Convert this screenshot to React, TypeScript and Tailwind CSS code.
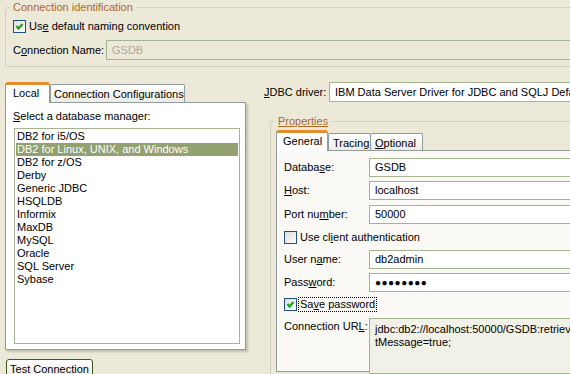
import React from 'react';

const Check = ({ checked }: { checked: boolean }) => (
  <span className="inline-block w-[13px] h-[13px] shrink-0 border border-[#1c5180] bg-gradient-to-br from-[#dcdcd7] to-white">
    {checked && (
      <svg width="11" height="11" viewBox="0 0 11 11" className="block">
        <polyline points="2.5,5 4.5,7.5 8.5,3" fill="none" stroke="#21a121" strokeWidth="2.2" />
      </svg>
    )}
  </span>
);

const Field = ({ label, value, className = '' }: { label: React.ReactNode; value: React.ReactNode; className?: string }) => (
  <div className={`flex items-center h-[19px] ${className}`}>
    <span className="w-[85px] shrink-0">{label}</span>
    <div className="w-[260px] h-[19px] border border-[#a5b490] bg-white pl-[5px] flex items-center">{value}</div>
  </div>
);

const databases = [
  'DB2 for i5/OS',
  'DB2 for Linux, UNIX, and Windows',
  'DB2 for z/OS',
  'Derby',
  'Generic JDBC',
  'HSQLDB',
  'Informix',
  'MaxDB',
  'MySQL',
  'Oracle',
  'SQL Server',
  'Sybase',
];

const App = () => {
  return (
    <div className="w-[570px] h-[374px] overflow-hidden bg-[#ece9d8] text-[11px] text-black leading-[13px] font-['Liberation_Sans',Arial,sans-serif] pt-[7px] pl-[5px]">
      {/* Connection identification */}
      <section className="relative w-[620px] h-[60px] border border-[#d0d0bf] rounded-[3px] pt-[12px] pl-[7px]">
        <span className="absolute -top-[7px] left-[4px] px-[3px] bg-[#ece9d8] text-[#b0671e]">Connection identification</span>
        <div className="flex items-center gap-[3px] h-[13px]">
          <Check checked />
          <span>Us<u>e</u> default naming convention</span>
        </div>
        <div className="flex items-center h-[20px] mt-[7px]">
          <span className="w-[93px] shrink-0">C<u>o</u>nnection Name:</span>
          <div className="w-[520px] h-[20px] border border-[#a5b490] flex items-center pl-[5px] text-[#aca899]">GSDB</div>
        </div>
      </section>

      <div className="flex mt-[15px]">
        {/* left column */}
        <div className="w-[241px] shrink-0">
          <div className="flex items-end h-[20px]">
            <div className="relative z-10 w-[45px] h-[21px] -mb-px bg-white border-x border-[#919b9c] border-t-[3px] border-t-[#e68b2c] rounded-t-[3px] pl-[7px] pt-[2px]">Local</div>
            <div className="w-[135px] h-[18px] border border-b-0 border-[#919b9c] rounded-t-[2px] bg-gradient-to-b from-white to-[#ecebe6] pl-[3px] pt-[3px]">Connection Configurations</div>
          </div>
          <div className="w-[241px] h-[248px] border border-[#919b9c] bg-white shadow-[2px_2px_2px_rgba(0,0,0,0.18)]">
            <div className="ml-[7px] mt-[7px]"><u>S</u>elect a database manager:</div>
            <div className="ml-[8px] mt-[5px] w-[226px] h-[216px] border border-[#a5b490] bg-white pt-px px-px">
              {databases.map((d, i) => (
                <div key={d} className={`h-[13px] pl-px whitespace-nowrap ${i === 1 ? 'bg-[#93a070] text-white' : ''}`}>{d}</div>
              ))}
            </div>
          </div>
          <button className="ml-px mt-[9px] w-[87px] h-[23px] border border-[#3d5b1e] rounded-[3px] bg-gradient-to-b from-white to-[#ecebe6] text-[11px] pb-[3px]">Test Connection</button>
        </div>

        {/* right column */}
        <div className="ml-[18px] w-[320px] shrink-0">
          <div className="flex items-center h-[20px]">
            <span className="w-[65px] shrink-0"><u>J</u>DBC driver:</span>
            <div className="w-[260px] h-[20px] border border-[#a5b490] bg-white pl-[5px] flex items-center whitespace-nowrap overflow-hidden">IBM Data Server Driver for JDBC and SQLJ Default</div>
          </div>

          <section className="relative ml-[6px] mt-[19px] h-[260px] border-l border-t border-[#d0d0bf] rounded-tl-[3px] pt-[8px] pl-[5px]">
            <span className="absolute -top-[7px] left-[4px] px-[3px] bg-[#ece9d8] text-[#b0671e] underline">Properties</span>
            <div className="flex items-end h-[20px]">
              <div className="relative z-10 w-[52px] h-[21px] -mb-px bg-white border-x border-[#919b9c] border-t-[3px] border-t-[#e68b2c] rounded-t-[3px] pl-[6px] pt-[2px]">General</div>
              <div className="w-[43px] h-[17px] border border-b-0 border-[#919b9c] rounded-t-[2px] bg-gradient-to-b from-white to-[#ecebe6] pl-[4px] pt-[3px]">Tracing</div>
              <div className="w-[52px] h-[17px] border border-b-0 border-l-0 border-[#919b9c] rounded-t-[2px] bg-gradient-to-b from-white to-[#ecebe6] pl-[4px] pt-[3px]"><u>O</u>ptional</div>
            </div>
            <div className="w-[320px] h-[222px] border border-[#919b9c] bg-[#faf9f5] pl-[7px] pt-[7px]">
              <Field label={<>Databa<u>s</u>e:</>} value="GSDB" />
              <Field className="mt-[4px]" label={<><u>H</u>ost:</>} value="localhost" />
              <Field className="mt-[5px]" label={<>Port nu<u>m</u>ber:</>} value="50000" />
              <div className="flex items-center gap-[3px] h-[13px] mt-[7px]">
                <Check checked={false} />
                <span>Use cl<u>i</u>ent authentication</span>
              </div>
              <Field className="mt-[6px]" label={<>User n<u>a</u>me:</>} value="db2admin" />
              <Field className="mt-[4px]" label={<>Pass<u>w</u>ord:</>} value={<span className="text-[10px] tracking-[0.5px]">●●●●●●●●</span>} />
              <div className="flex items-center gap-[1px] h-[13px] mt-[6px]">
                <Check checked />
                <span className="border border-dotted border-black px-px leading-[13px]">Sa<u>v</u>e password</span>
              </div>
              <div className="flex items-start mt-[7px]">
                <span className="w-[85px] shrink-0 pt-[2px]">Connection UR<u>L</u>:</span>
                <div className="w-[260px] h-[56px] border border-[#a5b490] bg-[#f2f1e8] pl-[5px] pt-[4px] leading-[13px] whitespace-nowrap overflow-hidden">
                  <div>jdbc:db2://localhost:50000/GSDB:retrieveMessagesFromServerOnGe</div>
                  <div>tMessage=true;</div>
                </div>
              </div>
            </div>
          </section>
        </div>
      </div>
    </div>
  );
};

export default App;
